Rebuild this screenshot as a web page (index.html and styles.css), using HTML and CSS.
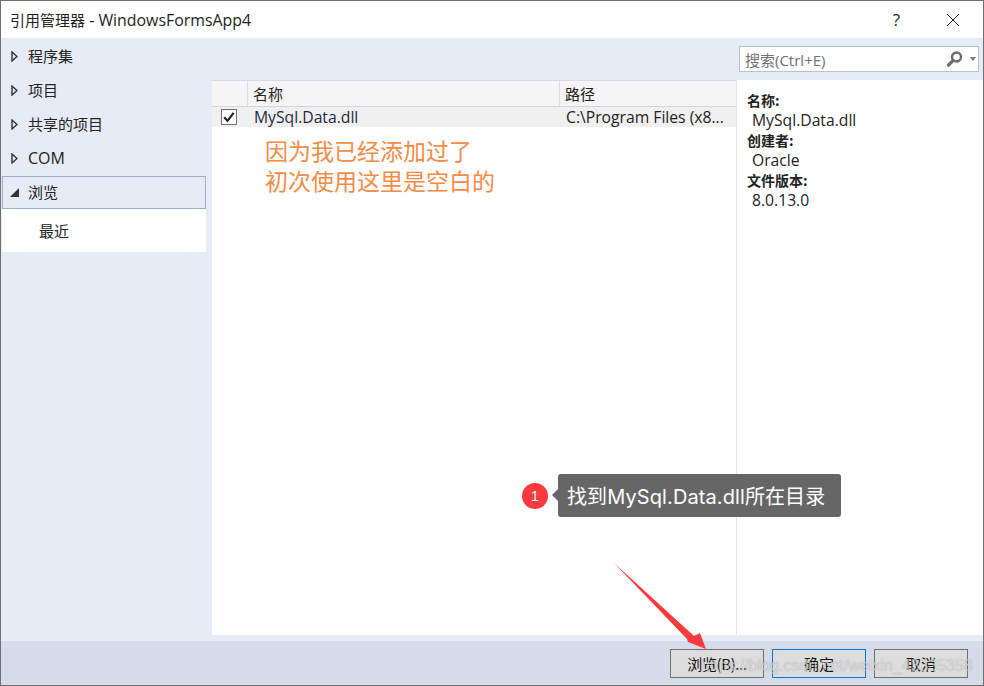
FILE: index.html
```html
<!DOCTYPE html>
<html lang="zh-CN">
<head>
<meta charset="utf-8">
<title>引用管理器</title>
<link rel="stylesheet" href="styles.css">
</head>
<body>
<div class="window">
  <header class="titlebar">
    <span class="title">引用管理器<span class="latin-title"> - WindowsFormsApp4</span></span>
    <span class="help">?</span>
    <svg class="close" width="14" height="14" viewBox="0 0 14 14"><path d="M1 1 L13 13 M13 1 L1 13" stroke="#222" stroke-width="1" fill="none"/></svg>
  </header>
  <div class="body">
    <nav class="sidebar">
      <div class="nav-item"><svg class="tri" width="7" height="11" viewBox="0 0 7 11"><path d="M1 1 L6 5.5 L1 10 Z" fill="#e6ebf5" stroke="#333" stroke-width="1.4"/></svg>程序集</div>
      <div class="nav-item"><svg class="tri" width="7" height="11" viewBox="0 0 7 11"><path d="M1 1 L6 5.5 L1 10 Z" fill="#e6ebf5" stroke="#333" stroke-width="1.4"/></svg>项目</div>
      <div class="nav-item"><svg class="tri" width="7" height="11" viewBox="0 0 7 11"><path d="M1 1 L6 5.5 L1 10 Z" fill="#e6ebf5" stroke="#333" stroke-width="1.4"/></svg>共享的项目</div>
      <div class="nav-item"><svg class="tri" width="7" height="11" viewBox="0 0 7 11"><path d="M1 1 L6 5.5 L1 10 Z" fill="#e6ebf5" stroke="#333" stroke-width="1.4"/></svg><span class="latin-lg">COM</span></div>
      <div class="nav-item selected"><i class="tri-open"></i>浏览</div>
      <div class="nav-sub">最近</div>
    </nav>
    <div class="main">
      <div class="searchrow">
        <div class="search">
          <span class="placeholder">搜索(Ctrl+E)</span>
          <svg class="mag" width="18" height="18" viewBox="0 0 18 18"><circle cx="10.5" cy="7" r="4.5" fill="none" stroke="#6a6a6a" stroke-width="2.4"/><path d="M7.2 10.4 L2.5 15.2" stroke="#6a6a6a" stroke-width="3.2" stroke-linecap="round"/></svg>
          <i class="drop"></i>
        </div>
      </div>
      <div class="content">
        <section class="list">
          <div class="list-head">
            <div class="hcell check-col"></div>
            <div class="hcell name-col">名称</div>
            <div class="hcell path-col">路径</div>
          </div>
          <div class="list-row">
            <div class="check-col"><svg class="check" width="16" height="16" viewBox="0 0 16 16"><rect x="0.5" y="0.5" width="15" height="15" fill="#fff" stroke="#707070"/><path d="M3.2 8.2 L6.5 11.8 L12.6 3.8" fill="none" stroke="#222" stroke-width="2.2"/></svg></div>
            <div class="name-cell latin">MySql.Data.dll</div>
            <div class="path-cell latin">C:\Program Files (x8...</div>
          </div>
          <p class="note">因为我已经添加过了<br>初次使用这里是空白的</p>
          <div class="callout">
            <span class="badge">1</span>
            <span class="bubble">找到MySql.Data.dll所在目录</span>
          </div>
        </section>
        <aside class="details">
          <b>名称:</b><span class="latin">MySql.Data.dll</span>
          <b>创建者:</b><span class="latin">Oracle</span>
          <b>文件版本:</b><span class="latin">8.0.13.0</span>
        </aside>
      </div>
    </div>
  </div>
  <footer class="footer">
    <button class="btn browse">浏览(B)...</button>
    <button class="btn primary">确定</button>
    <button class="btn">取消</button>
  </footer>
  <svg class="arrow" width="100" height="90" viewBox="0 0 100 90"><path d="M0 0 L80 73 L86 70 L92 86 L74 79 L73 76 Z" fill="#fb3a3e"/></svg>
  <div class="watermark">https://blog.csdn.net/weixin_43335358</div>
</div>
</body>
</html>
```
FILE: styles.css
```css
* { box-sizing: border-box; }
html, body { margin: 0; padding: 0; }
body {
  width: 984px; height: 686px; overflow: hidden; background: #fff;
  font-family: "Open Sans", "Noto Sans CJK SC", sans-serif;
  font-size: 15px; color: #1e1e1e;
}
.latin { font-family: "Open Sans", sans-serif; font-size: 15.7px; }
.latin-title { font-family: "Open Sans", sans-serif; font-size: 15.9px; }
.latin-lg { font-family: "Open Sans", sans-serif; font-size: 16px; margin-top: 2px; }
.window {
  position: relative; width: 984px; height: 686px;
  display: flex; flex-direction: column;
  border: 1px solid #707070; background: #fff;
}
.titlebar {
  height: 37px; flex: none; display: flex; align-items: center;
  padding-left: 9px; background: #fff;
}
.title { flex: 1; font-family: "Noto Sans CJK SC", sans-serif; white-space: nowrap; }
.help { font-size: 17px; margin-right: 46px; color: #222; }
.close { margin-right: 23px; }
.body { flex: 1; display: flex; background: #e6ebf5; min-height: 0; }
.sidebar { width: 211px; flex: none; padding-top: 1px; padding-left: 1px; }
.nav-item {
  height: 34px; display: flex; align-items: center;
  padding: 0 0 2px 9px; width: 204px; font-family: "Noto Sans CJK SC", sans-serif; color: #222;
}
.tri { flex: none; margin: 2px 10px 0 0; }
.tri-open {
  width: 0; height: 0; margin: 2px 9px 0 0;
  border-right: 9px solid #333; border-top: 9px solid transparent;
}
.selected { border: 1px solid #a0aec8; margin-top: 1px; padding-left: 7px; height: 33px; }
.nav-sub {
  height: 43px; width: 204px; background: #fff; display: flex; align-items: center;
  padding-left: 37px; font-family: "Noto Sans CJK SC", sans-serif; color: #222;
}
.main { flex: 1; display: flex; flex-direction: column; min-width: 0; }
.searchrow { height: 42px; flex: none; display: flex; justify-content: flex-end; padding: 8px 4px 0 0; }
.search {
  width: 240px; height: 26px; background: #fff; border: 1px solid #b9c1d6;
  display: flex; align-items: center; padding: 0 2px 0 5px;
}
.placeholder { flex: 1; color: #717171; }
.mag { margin-right: 6px; }
.drop { width: 0; height: 0; border-top: 4px solid #777; border-left: 3.5px solid transparent; border-right: 3.5px solid transparent; }
.content { flex: 1; display: flex; min-height: 0; margin-bottom: 6px; background: #fff; }
.list { position: relative; width: 525px; flex: none; border-right: 1px solid #e0e5f2; }
.list-head { height: 27px; display: flex; background: #f5f5f5; border-top: 1px solid #d6dbe9; border-bottom: 1px solid #d0d5e5; }
.hcell { height: 100%; padding: 1px 0 0 5px; border-right: 1px solid #d6dbe9; font-family: "Noto Sans CJK SC", sans-serif; line-height: 24px; color: #222; }
.check-col { width: 36px; flex: none; display: flex; align-items: center; padding-left: 9px; }
.hcell.check-col { padding: 0; }
.name-col { width: 312px; }
.path-col { flex: 1; border-right: 0; }
.list-row { height: 20px; display: flex; align-items: center; background: #f0f0f0; }
.name-cell { width: 312px; padding-left: 6px; color: #1e2a45; }
.path-cell { flex: 1; padding-left: 6px; white-space: nowrap; color: #222; }
.note {
  margin: 0; padding: 8px 0 0 53px; font-size: 23px; line-height: 30px;
  color: #f58b46; font-family: "Noto Sans CJK SC", sans-serif;
}
.callout { position: absolute; left: 310px; top: 394px; display: flex; align-items: center; }
.badge {
  width: 26px; height: 26px; border-radius: 50%; background: #fb3a3e; color: #fff;
  display: flex; align-items: center; justify-content: center; font-size: 14px; font-family: "Liberation Sans", sans-serif;
}
.bubble {
  position: relative; margin-left: 10px; width: 283px; height: 43px; background: #666; color: #fff;
  border-radius: 3px; display: flex; align-items: center; padding-left: 9px; font-size: 20px; letter-spacing: .1px;
  font-family: "Inter", "Noto Sans CJK SC", sans-serif; white-space: nowrap;
}
.bubble::before {
  content: ""; position: absolute; left: -6px; top: 15px; width: 0; height: 0;
  border-right: 6px solid #666; border-top: 6px solid transparent; border-bottom: 6px solid transparent;
}
.details { flex: 1; display: flex; flex-direction: column; padding: 10px 0 0 10px; line-height: 20px; color: #222; }
.details b { font-family: "Noto Sans CJK SC", sans-serif; font-weight: 700; font-size: 14px; }
.details span { padding-left: 5px; }
.footer {
  height: 44px; flex: none; background: #d6dbe9; display: flex; justify-content: flex-end;
  align-items: flex-start; gap: 8px; padding: 8px 15px 0 0;
}
.btn {
  width: 94px; height: 29px; background: #dddddd; border: 1px solid #707070; padding: 0;
  font-size: 15px; font-family: "Noto Sans CJK SC", sans-serif; color: #111;
}
.browse { letter-spacing: -.4px; }
.primary { border-color: #0078d7; }
.arrow { position: absolute; left: 613px; top: 562px; }
.watermark {
  position: absolute; right: 10px; top: 654px; font-size: 16px; line-height: 22px;
  color: rgba(255,255,255,.6); text-shadow: 0 0 1px rgba(0,0,0,.35);
  font-family: "Liberation Sans", sans-serif; white-space: nowrap;
}
```
